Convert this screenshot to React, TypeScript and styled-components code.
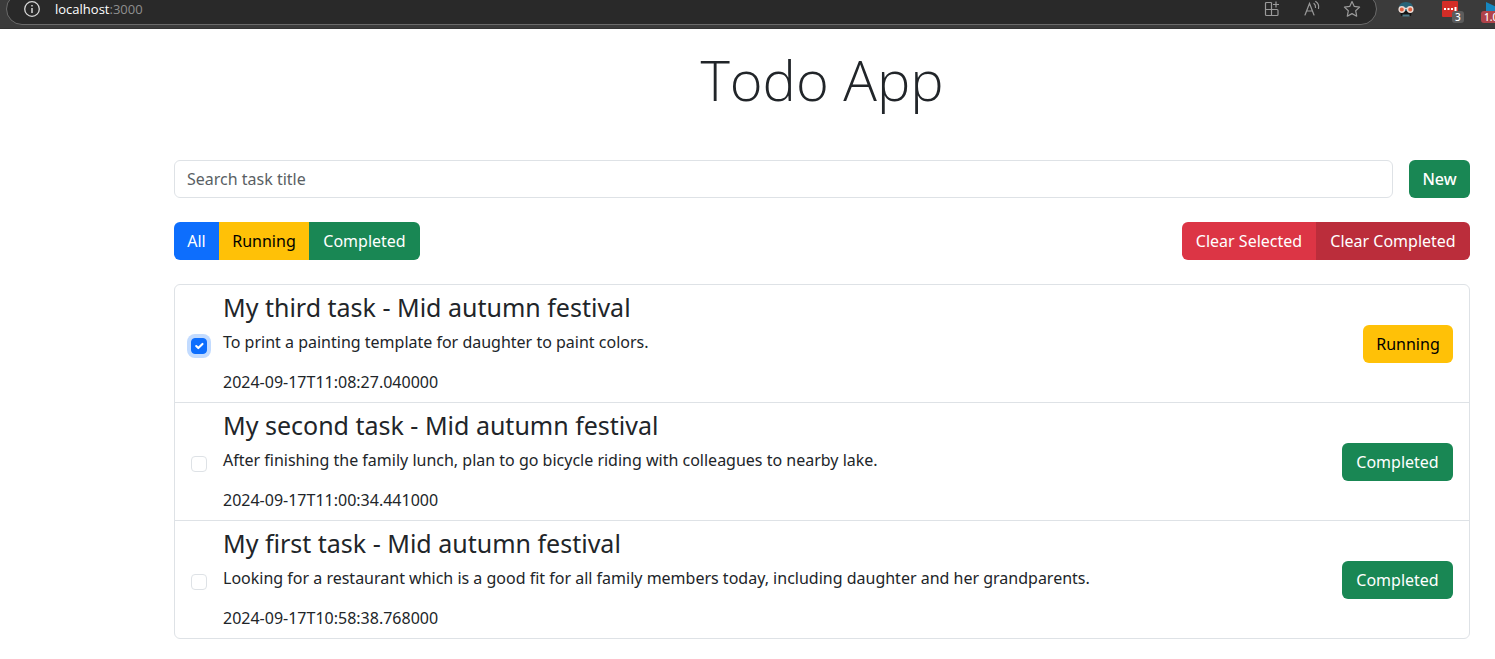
import React, { useState } from "react";
import styled, { createGlobalStyle, css } from "styled-components";

const GlobalStyle = createGlobalStyle`
  *, *::before, *::after { box-sizing: border-box; }
  body {
    margin: 0;
    background: #fff;
    color: #212529;
    font-family: "Segoe UI", "Noto Sans", sans-serif;
    font-size: 16px;
    line-height: 24px;
  }
`;

const BrowserBar = styled.header`
  display: flex;
  align-items: flex-start;
  height: 29px;
  overflow: hidden;
  background: #3b3b3b;
  border-bottom: 1px solid #333;
`;

const AddressPill = styled.div`
  display: flex;
  flex: 1;
  align-items: center;
  height: 32px;
  margin: -7px 0 0 6px;
  padding: 0 15px 0 16px;
  border: 1px solid #6b6b6b;
  border-radius: 16px;
  background: #292929;
  color: #8f8f8f;
  font-family: "Segoe UI", "Open Sans", sans-serif;
  font-size: 13px;
`;

const Host = styled.p`
  flex: 1;
  margin: 0 0 0 14px;
  strong { color: #fff; font-weight: 400; }
`;

const AddressTools = styled.div`
  display: flex;
  align-items: center;
  gap: 22px;
`;

const Extensions = styled.div`
  display: flex;
  gap: 17px;
  margin: 0 -17px 0 20px;
`;

const Page = styled.main`
  padding: 16px 25px 20px 174px;
`;

const Title = styled.h1`
  margin: 0 0 47px;
  font-family: "Segoe UI", "Open Sans", sans-serif;
  font-size: 56px;
  font-weight: 300;
  line-height: 68px;
  text-align: center;
`;

const Toolbar = styled.div`
  display: flex;
  justify-content: space-between;
  gap: 16px;
  margin-bottom: 24px;
`;

const SearchInput = styled.input`
  flex: 1;
  min-width: 0;
  height: 38px;
  padding: 0 12px;
  border: 1px solid #dee2e6;
  border-radius: 6px;
  color: inherit;
  font: inherit;
  &::placeholder { color: #5a5f64; opacity: 1; }
`;

type Tone = "primary" | "warning" | "success" | "danger" | "dangerActive";
const tones: Record<Tone, string> = {
  primary: "background: #0d6efd; color: #fff;",
  warning: "background: #ffc107; color: #000;",
  success: "background: #198754; color: #fff;",
  danger: "background: #dc3545; color: #fff;",
  dangerActive: "background: #bb2d3b; color: #fff;",
};

const Button = styled.button<{ $tone: Tone; $minWidth: number; $strong?: boolean }>`
  min-width: ${({ $minWidth }) => $minWidth}px;
  height: 38px;
  padding: 0 12px;
  border: 0;
  border-radius: 6px;
  font: inherit;
  white-space: nowrap;
  cursor: pointer;
  ${({ $strong }) => $strong && css`font-weight: 500;`}
  ${({ $tone }) => tones[$tone]}
`;

const ButtonGroup = styled.div`
  display: flex;
  ${Button}:not(:first-child) { border-top-left-radius: 0; border-bottom-left-radius: 0; }
  ${Button}:not(:last-child) { border-top-right-radius: 0; border-bottom-right-radius: 0; }
`;

const TaskList = styled.ul`
  margin: 0;
  padding: 0;
  border: 1px solid #dee2e6;
  border-radius: 6px;
  list-style: none;
`;

const TaskItem = styled.li`
  display: flex;
  align-items: center;
  gap: 16px;
  padding: 8px 16px;
  & + & { border-top: 1px solid #dee2e6; }
`;

const Checkbox = styled.input`
  flex: none;
  width: 16px;
  height: 16px;
  margin: 4px 0 0;
  appearance: none;
  border: 1px solid #dee2e6;
  border-radius: 4px;
  background: #fff;
  &:checked {
    border-color: #0d6efd;
    background: #0d6efd url("data:image/svg+xml,%3csvg xmlns='http://www.w3.org/2000/svg' viewBox='0 0 20 20'%3e%3cpath fill='none' stroke='%23fff' stroke-linecap='round' stroke-linejoin='round' stroke-width='3' d='m6 10 3 3 6-6'/%3e%3c/svg%3e") center / contain no-repeat;
    box-shadow: 0 0 0 4px #c2dbff;
  }
`;

const TaskText = styled.label`
  flex: 1;
  min-width: 0;
`;

const TaskTitle = styled.h2`
  margin: 0 0 9px;
  font-size: 25px;
  font-weight: 400;
  line-height: 28px;
`;

const TaskLine = styled.p`
  margin: 0;
  & + & { margin-top: 16px; }
`;

const InfoIcon = () => (
  <svg width="18" height="18" viewBox="0 0 18 18" fill="none" stroke="#d8d8d8">
    <circle cx="9" cy="9" r="7.3" strokeWidth="1.3" />
    <path d="M9 8v5M9 5v1.6" strokeWidth="1.5" />
  </svg>
);

const AddAppIcon = () => (
  <svg width="18" height="18" viewBox="0 0 18 18" fill="none" stroke="#9a9a9a" strokeWidth="1.2">
    <path d="M8.500 2.500H3.500Q2.500 2.500 2.500 3.500V14.500Q2.500 15.500 3.500 15.500H14Q15 15.500 15 14.500V10.500Q15 9.500 14 9.500H2.500M8.500 2.500V15.500M13 1.500V7.500M10 4.500H16" />
  </svg>
);

const ReadAloudIcon = () => (
  <svg width="18" height="18" viewBox="0 0 18 18" fill="none" stroke="#9a9a9a" strokeWidth="1.2" strokeLinecap="round">
    <path d="M2 15 6.500 3.500 11 15M3.500 11H9.500M11 3.500Q12.800 5 12.500 7.500M12.700 1.500Q16.500 4 15.500 8.500" />
  </svg>
);

const StarIcon = () => (
  <svg width="18" height="18" viewBox="0 0 18 18" fill="none" stroke="#9a9a9a" strokeWidth="1.2" strokeLinejoin="round">
    <path d="m9 1.500 2.300 4.900 5.300.7-3.900 3.700 1 5.400L9 13.600l-4.700 2.600 1-5.400L1.400 7.100l5.300-.7z" />
  </svg>
);

const MaskIcon = () => (
  <svg width="18" height="18" viewBox="0 0 18 18">
    <path d="M2 8Q2 2 9 2Q16 2 16 8V11H2Z" fill="#286478" />
    <path d="M3 11H15L14 16H4Z" fill="#151515" />
    <path d="M5.500 15.500h7" stroke="#4f7a88" strokeWidth="2" />
    <path d="M2 8.500H16" stroke="#e8d8d2" strokeWidth="1.500" />
    <circle cx="4.800" cy="9.500" r="2.700" fill="#e0613f" stroke="#eadad3" strokeWidth="1.400" />
    <circle cx="13.200" cy="9.500" r="2.700" fill="#e0613f" stroke="#eadad3" strokeWidth="1.400" />
  </svg>
);

const ExtensionSlot = styled.div`
  position: relative;
  display: flex;
  flex: none;
  width: 27px;
  height: 28px;
`;

const Badge = styled.span<{ $color: string }>`
  position: absolute;
  top: 11px;
  left: 11px;
  padding: 0 3px;
  border-radius: 3px;
  background: ${({ $color }) => $color};
  color: #fff;
  font-size: 10px;
  font-weight: 500;
  line-height: 12px;
`;

const WideBadge = styled(Badge)`
  left: -4px;
`;

const PasswordIcon = () => (
  <svg width="18" height="18" viewBox="0 0 18 18">
    <rect x="1" y="1" width="16" height="16" rx="1" fill="#d32d27" />
    <path d="M3 9h2M6.500 9h2M10 9h2M14.500 7v4" stroke="#fff" strokeWidth="2" />
  </svg>
);

const PlayIcon = () => (
  <svg width="18" height="18" viewBox="0 0 18 18">
    <path d="M1 2 18 10 1 17Z" fill="#1687c0" />
  </svg>
);

type Task = { id: number; title: string; description: string; created: string; done: boolean };

const tasks: Task[] = [
  { id: 3, title: "My third task - Mid autumn festival", description: "To print a painting template for daughter to paint colors.", created: "2024-09-17T11:08:27.040000", done: false },
  { id: 2, title: "My second task - Mid autumn festival", description: "After finishing the family lunch, plan to go bicycle riding with colleagues to nearby lake.", created: "2024-09-17T11:00:34.441000", done: true },
  { id: 1, title: "My first task - Mid autumn festival", description: "Looking for a restaurant which is a good fit for all family members today, including daughter and her grandparents.", created: "2024-09-17T10:58:38.768000", done: true },
];

export default function App() {
  const [selected, setSelected] = useState<number[]>([3]);
  const toggle = (id: number) =>
    setSelected((ids) => (ids.includes(id) ? ids.filter((n) => n !== id) : [...ids, id]));

  return (
    <>
      <GlobalStyle />
      <BrowserBar>
        <AddressPill>
          <InfoIcon />
          <Host><strong>localhost</strong>:3000</Host>
          <AddressTools><AddAppIcon /><ReadAloudIcon /><StarIcon /></AddressTools>
        </AddressPill>
        <Extensions>
          <ExtensionSlot><MaskIcon /></ExtensionSlot>
          <ExtensionSlot><PasswordIcon /><Badge $color="#5c5c5c">3</Badge></ExtensionSlot>
          <ExtensionSlot><PlayIcon /><WideBadge $color="#b0434a">1.0</WideBadge></ExtensionSlot>
        </Extensions>
      </BrowserBar>
      <Page>
        <Title>Todo App</Title>
        <Toolbar>
          <SearchInput type="search" aria-label="Search task title" placeholder="Search task title" />
          <Button type="button" $tone="success" $minWidth={61} $strong>New</Button>
        </Toolbar>
        <Toolbar>
          <ButtonGroup role="group" aria-label="Filter">
            <Button type="button" $tone="primary" $minWidth={45}>All</Button>
            <Button type="button" $tone="warning" $minWidth={90}>Running</Button>
            <Button type="button" $tone="success" $minWidth={111}>Completed</Button>
          </ButtonGroup>
          <ButtonGroup role="group" aria-label="Clear">
            <Button type="button" $tone="danger" $minWidth={134}>Clear Selected</Button>
            <Button type="button" $tone="dangerActive" $minWidth={154}>Clear Completed</Button>
          </ButtonGroup>
        </Toolbar>
        <TaskList>
          {tasks.map((task) => (
            <TaskItem key={task.id}>
              <Checkbox
                type="checkbox"
                id={`task-${task.id}`}
                checked={selected.includes(task.id)}
                onChange={() => toggle(task.id)}
              />
              <TaskText htmlFor={`task-${task.id}`}>
                <TaskTitle>{task.title}</TaskTitle>
                <TaskLine>{task.description}</TaskLine>
                <TaskLine>{task.created}</TaskLine>
              </TaskText>
              <Button
                type="button"
                $tone={task.done ? "success" : "warning"}
                $minWidth={task.done ? 111 : 90}
              >
                {task.done ? "Completed" : "Running"}
              </Button>
            </TaskItem>
          ))}
        </TaskList>
      </Page>
    </>
  );
}
